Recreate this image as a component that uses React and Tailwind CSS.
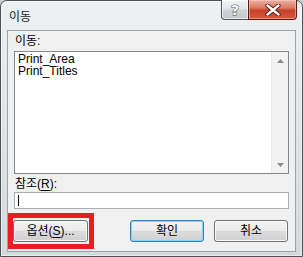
const btn =
  "flex items-center justify-center h-[22px] rounded-[3px] border bg-[linear-gradient(#f2f2f2_0%,#ebebeb_50%,#dddddd_50%,#cfcfcf_100%)] leading-[14px]";

function Button({ children, primary, className = "" }) {
  return (
    <div
      className={
        btn +
        " " +
        (primary
          ? "border-[#3c7fb1] shadow-[inset_0_0_0_1px_#7fd4f6]"
          : "border-[#707070] shadow-[inset_0_0_0_1px_#fbfbfb]") +
        " " +
        className
      }
    >
      {children}
    </div>
  );
}

function TitleButtons() {
  return (
    <div className="flex -mt-px mr-[5px] ml-auto">
      <div className="flex items-center justify-center w-[27px] h-[20px] border border-t-0 border-r-0 border-[#51565e] rounded-bl-[4px] bg-[linear-gradient(#f3f4f5_0%,#e2e4e7_45%,#cfd2d6_55%,#c4c8cd_100%)] shadow-[inset_0_0_0_1px_rgba(255,255,255,0.6)]">
        <span className="font-['DejaVu_Sans',sans-serif] font-bold text-[14px] leading-none text-white [-webkit-text-stroke:1px_#4a4a4a] [paint-order:stroke_fill]">
          ?
        </span>
      </div>
      <div className="flex items-center justify-center w-[49px] h-[20px] border border-t-0 border-[#5e1a10] rounded-br-[4px] bg-[linear-gradient(#eab3a6_0%,#dc7a64_40%,#c7422a_55%,#d45a3e_100%)] shadow-[inset_0_0_0_1px_rgba(255,210,200,0.5)]">
        <svg width="16" height="12" viewBox="0 0 16 12">
          <path
            d="M2.5 1.5 L13.5 10.5 M13.5 1.5 L2.5 10.5"
            stroke="#3b1a14"
            strokeWidth="4.2"
            strokeLinecap="round"
          />
          <path
            d="M2.5 1.5 L13.5 10.5 M13.5 1.5 L2.5 10.5"
            stroke="#ffffff"
            strokeWidth="2.4"
            strokeLinecap="round"
          />
        </svg>
      </div>
    </div>
  );
}

export default function App() {
  return (
    <div className="w-[303px] h-[257px] bg-[#c9cdd2] font-['Liberation_Sans','Noto_Sans_CJK_KR',sans-serif] text-[12px] text-black">
      <div className="flex flex-col w-[303px] h-[257px] rounded-t-[7px] border border-[#4d5257] bg-[linear-gradient(#eef0f1_0%,#e3e6e8_40%,#d5d9dc_100%)] shadow-[inset_0_0_0_1px_rgba(255,255,255,0.5)]">
        <div className="flex items-start h-[29px]">
          <span className="ml-[8px] mt-[9px] leading-[14px] text-[#1b1b1b]">이동</span>
          <TitleButtons />
        </div>

        <div className="flex flex-col mx-[6px] h-[222px] border border-[#9ea3a8] bg-[#f0f0f0]">
          <div className="ml-[7px] mt-[3px] h-[14px] leading-[14px]">이동:</div>

          <div className="flex ml-[6px] mt-[3px] w-[275px] h-[123px] border border-[#828790] bg-white">
            <div className="flex flex-col pl-[3px] pt-[1px] leading-[12px]">
              <span>Print_Area</span>
              <span>Print_Titles</span>
            </div>
            <div className="flex flex-col justify-between ml-auto w-[17px] h-full bg-[#f2f2f2] border-l border-[#ececec]">
              <div className="flex items-center justify-center h-[17px]">
                <svg width="7" height="4" viewBox="0 0 7 4">
                  <path d="M3.5 0 L7 4 L0 4 Z" fill="#8a8a8a" />
                </svg>
              </div>
              <div className="flex items-center justify-center h-[17px]">
                <svg width="7" height="4" viewBox="0 0 7 4">
                  <path d="M0 0 L7 0 L3.5 4 Z" fill="#8a8a8a" />
                </svg>
              </div>
            </div>
          </div>

          <div className="ml-[7px] mt-[3px] h-[14px] leading-[14px]">
            참조(<span className="underline underline-offset-2">R</span>):
          </div>

          <div className="flex items-center ml-[6px] mt-[1px] w-[275px] h-[17px] border border-[#abadb3] bg-white">
            <div className="ml-[3px] w-px h-[11px] bg-black" />
          </div>

          <div className="flex items-start mt-[4px]">
            <div className="w-[86px] h-[36px] border-[5px] border-[#ed1c24] pt-[2px]">
              <Button className="w-[75px]">
                옵션(<span className="underline underline-offset-2">S</span>)...
              </Button>
            </div>
            <Button primary className="ml-[36px] mt-[7px] w-[74px]">
              확인
            </Button>
            <Button className="ml-[10px] mt-[7px] w-[74px]">취소</Button>
          </div>
        </div>
      </div>
    </div>
  );
}
